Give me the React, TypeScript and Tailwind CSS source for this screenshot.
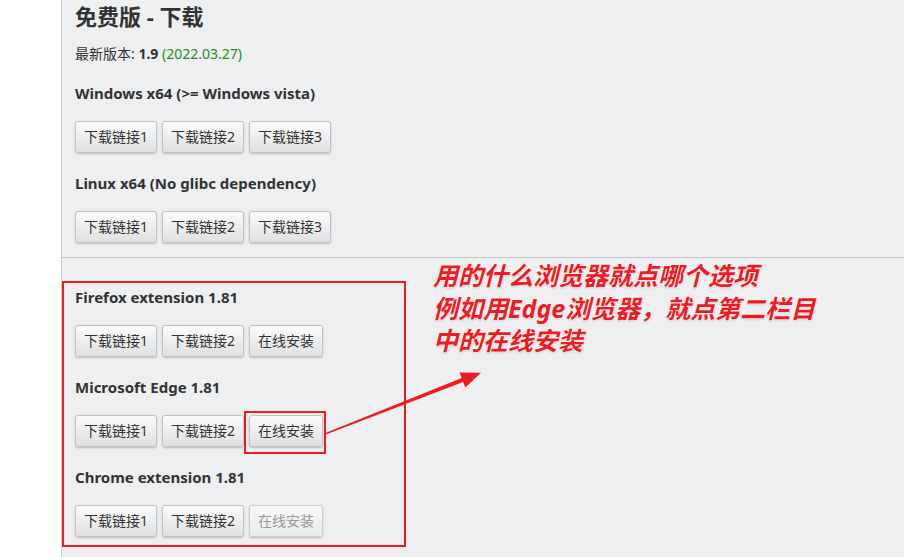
import React from "react";

const FONT = "[font-family:'Noto_Sans','Noto_Sans_CJK_SC',sans-serif]";

type Btn = { label: string; disabled?: boolean };

function DlButton({ label, disabled }: Btn) {
  return (
    <button
      disabled={disabled}
      className={
        "h-[32px] rounded-[3px] border px-[8px] text-[14px] leading-none shadow-[0_1px_2px_rgba(0,0,0,0.22)] bg-linear-to-b " +
        (disabled
          ? "border-[#cfcfcf] from-[#f7f7f7] to-[#ebebeb] text-[#9a9a9a]"
          : "border-[#c2c2c2] from-[#fbfbfb] to-[#e0e0e0] text-[#333]")
      }
    >
      {label}
    </button>
  );
}

function Section({ title, buttons }: { title: string; buttons: Btn[] }) {
  return (
    <div className="pb-[20px]">
      <h3 className="mb-[18px] h-[20px] text-[15px] font-bold leading-[20px] text-[#333]">{title}</h3>
      <div className="flex gap-[5px]">
        {buttons.map((b) => (
          <DlButton key={b.label} {...b} />
        ))}
      </div>
    </div>
  );
}

const three: Btn[] = [{ label: "下载链接1" }, { label: "下载链接2" }, { label: "下载链接3" }];

export default function App() {
  return (
    <div className={`relative flex h-[557px] w-[904px] overflow-hidden bg-white ${FONT}`}>
      <div className="w-[61px] shrink-0 bg-white" />
      <div className="flex-1 border-l border-[#d2d2d2] bg-[#eeeff1]">
        <div className="px-[13px] pt-[2px]">
          <h1 className="h-[28px] text-[22px] font-bold leading-[28px] text-[#333]">免费版 - 下载</h1>
          <p className="mt-[15px] mb-[20px] h-[18px] text-[14px] leading-[18px] text-[#333]">
            最新版本: <b>1.9</b> <span className="text-[#228b22]">(2022.03.27)</span>
          </p>
          <Section title="Windows x64 (>= Windows vista)" buttons={three} />
          <Section title="Linux x64 (No glibc dependency)" buttons={three} />
        </div>
        <div className="-mt-[6px] border-t border-[#c4c4c4]" />
        <div className="px-[13px] pt-[29px]">
          <Section
            title="Firefox extension 1.81"
            buttons={[{ label: "下载链接1" }, { label: "下载链接2" }, { label: "在线安装" }]}
          />
          <Section
            title="Microsoft Edge 1.81"
            buttons={[{ label: "下载链接1" }, { label: "下载链接2" }, { label: "在线安装" }]}
          />
          <Section
            title="Chrome extension 1.81"
            buttons={[{ label: "下载链接1" }, { label: "下载链接2" }, { label: "在线安装", disabled: true }]}
          />
        </div>
      </div>

      {/* annotations */}
      <div className="pointer-events-none absolute left-[62px] top-[281px] h-[266px] w-[344px] border-2 border-[#ec1c24]" />
      <div className="pointer-events-none absolute left-[244px] top-[411px] h-[43px] w-[82px] border-2 border-[#ec1c24]" />
      <svg className="pointer-events-none absolute left-0 top-0" width="904" height="557" viewBox="0 0 904 557">
        <polygon
          fill="#ec1c24"
          points="324.8,433.2 461.7,378.1 459.5,372.6 481,372.7 465.3,387.4 463.1,381.9 325.2,434.8"
        />
      </svg>
      <div className="pointer-events-none absolute left-[433px] top-[259px] text-[25px] font-bold italic leading-[32.5px] text-[#ec1c24] [text-shadow:0_0_2px_#fff,0_0_2px_#fff,0_0_1px_#fff,0_1px_2px_rgba(0,0,0,0.25)]">
        <div>用的什么浏览器就点哪个选项</div>
        <div>例如用Edge浏览器，就点第二栏目</div>
        <div>中的在线安装</div>
      </div>
    </div>
  );
}
